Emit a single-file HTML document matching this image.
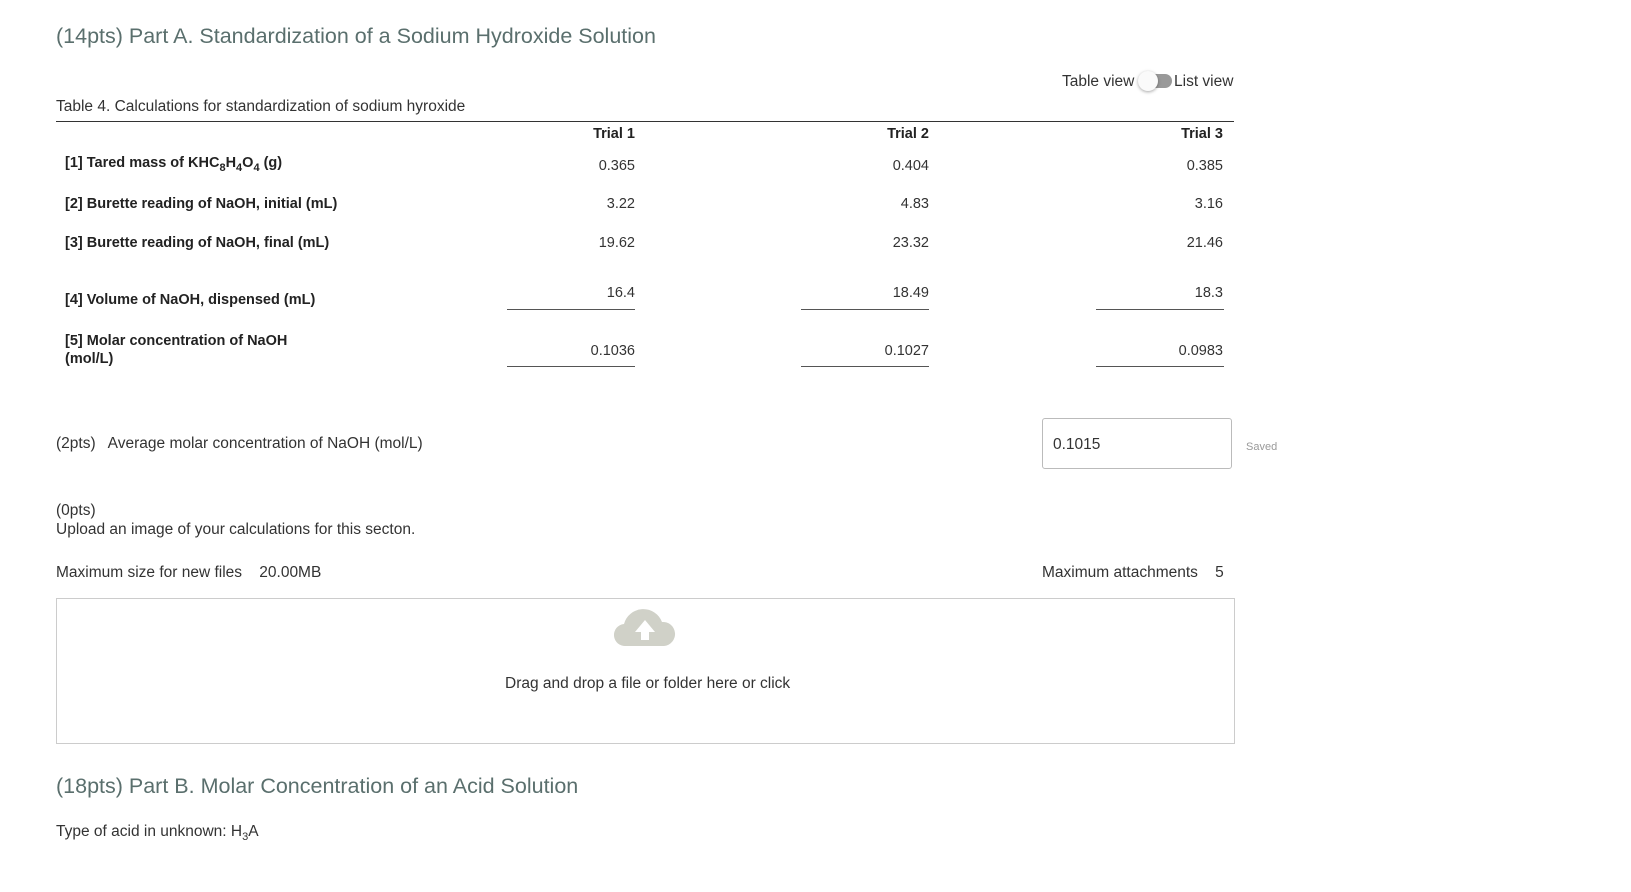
<!DOCTYPE html>
<html><head><meta charset="utf-8"><style>
body{margin:0;width:1631px;height:892px;background:#fff;font-family:"Liberation Sans",sans-serif;color:#333;position:relative;overflow:hidden}
.a{position:absolute;white-space:nowrap}
h1,h2{position:absolute;margin:0;font-weight:normal;color:#5a6f6d;font-size:21.5px;left:56px}
.t{font-size:15.5px}
.n{font-size:14.5px}
.b{font-weight:bold;font-size:14.5px;color:#222}
.r{text-align:right;width:140px}
.ul{position:absolute;height:1px;background:#555;width:128px}
sub{font-size:11px}
</style></head><body>
<h1 style="top:24px">(14pts) Part A. Standardization of a Sodium Hydroxide Solution</h1>
<div class="a t" style="left:1062px;top:73px">Table view</div>
<div class="a" style="left:1144px;top:74px;width:28px;height:14px;border-radius:7px;background:#999"></div>
<div class="a" style="left:1138px;top:71px;width:20px;height:20px;border-radius:50%;background:#fafafa;box-shadow:0 1px 3px rgba(0,0,0,.35)"></div>
<div class="a t" style="left:1174px;top:73px">List view</div>
<div class="a t" style="left:56px;top:98px">Table 4. Calculations for standardization of sodium hyroxide</div>
<div class="a" style="left:56px;top:121px;width:1178px;height:1px;background:#333"></div>
<div class="a b r" style="left:495px;top:126px">Trial 1</div>
<div class="a b r" style="left:789px;top:126px">Trial 2</div>
<div class="a b r" style="left:1083px;top:126px">Trial 3</div>
<div class="a b" style="left:65px;top:155px">[1] Tared mass of KHC<sub>8</sub>H<sub>4</sub>O<sub>4</sub> (g)</div>
<div class="a b" style="left:65px;top:196px">[2] Burette reading of NaOH, initial (mL)</div>
<div class="a b" style="left:65px;top:235px">[3] Burette reading of NaOH, final (mL)</div>
<div class="a b" style="left:65px;top:292px">[4] Volume of NaOH, dispensed (mL)</div>
<div class="a b" style="left:65px;top:332px;line-height:18px">[5] Molar concentration of NaOH<br>(mol/L)</div>
<div class="a n r" style="left:495px;top:158px">0.365</div><div class="a n r" style="left:789px;top:158px">0.404</div><div class="a n r" style="left:1083px;top:158px">0.385</div>
<div class="a n r" style="left:495px;top:196px">3.22</div><div class="a n r" style="left:789px;top:196px">4.83</div><div class="a n r" style="left:1083px;top:196px">3.16</div>
<div class="a n r" style="left:495px;top:235px">19.62</div><div class="a n r" style="left:789px;top:235px">23.32</div><div class="a n r" style="left:1083px;top:235px">21.46</div>
<div class="a n r" style="left:495px;top:285px">16.4</div><div class="a n r" style="left:789px;top:285px">18.49</div><div class="a n r" style="left:1083px;top:285px">18.3</div>
<div class="ul" style="left:507px;top:309px"></div><div class="ul" style="left:801px;top:309px"></div><div class="ul" style="left:1096px;top:309px"></div>
<div class="a n r" style="left:495px;top:343px">0.1036</div><div class="a n r" style="left:789px;top:343px">0.1027</div><div class="a n r" style="left:1083px;top:343px">0.0983</div>
<div class="ul" style="left:507px;top:366px"></div><div class="ul" style="left:801px;top:366px"></div><div class="ul" style="left:1096px;top:366px"></div>
<div class="a t" style="left:56px;top:435px">(2pts)&nbsp;&nbsp; Average molar concentration of NaOH (mol/L)</div>
<div class="a" style="left:1042px;top:418px;width:188px;height:49px;border:1px solid #bbb;border-radius:3px"></div>
<div class="a t" style="left:1053px;top:436px">0.1015</div>
<div class="a" style="left:1246px;top:441px;font-size:11px;color:#999">Saved</div>
<div class="a t" style="left:56px;top:502px">(0pts)</div>
<div class="a t" style="left:56px;top:521px">Upload an image of your calculations for this secton.</div>
<div class="a t" style="left:56px;top:564px">Maximum size for new files&nbsp;&nbsp;&nbsp; 20.00MB</div>
<div class="a t" style="left:1042px;top:564px">Maximum attachments&nbsp;&nbsp;&nbsp; 5</div>
<div class="a" style="left:56px;top:598px;width:1177px;height:144px;border:1px solid #ccc"></div>
<svg class="a" style="left:614px;top:606px" width="62" height="42" viewBox="0 0 62 42"><path d="M12 40 A11 11 0 0 1 10 18 A20 20 0 0 1 48 16 A12 12 0 0 1 50 40 Z" fill="#d0d1c8"/><path d="M31 14 L21 26 L27 26 L27 34 L35 34 L35 26 L41 26 Z" fill="#fff"/></svg>
<div class="a t" style="left:505px;top:675px">Drag and drop a file or folder here or click</div>
<h2 style="top:774px">(18pts) Part B. Molar Concentration of an Acid Solution</h2>
<div class="a t" style="left:56px;top:823px">Type of acid in unknown: H<sub>3</sub>A</div>
</body></html>
